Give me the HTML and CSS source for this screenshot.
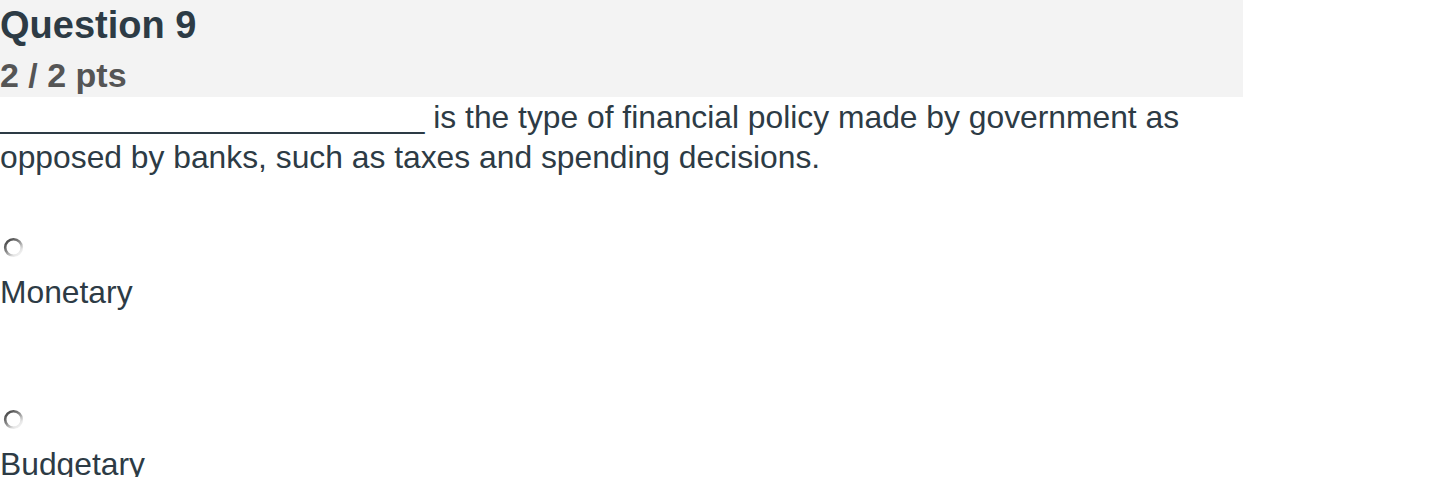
FILE: index.html
```html
<!DOCTYPE html>
<html lang="en">
<head>
<meta charset="utf-8">
<title>Question 9</title>
<link rel="stylesheet" href="styles.css">
</head>
<body>
<div class="question">
  <div class="q-header">
    <h2 class="q-title">Question 9</h2>
    <div class="q-points">2 / 2 pts</div>
  </div>
  <p class="q-text">________________________ is the type of financial policy made by government as opposed by banks, such as taxes and spending decisions.</p>
  <div class="answers">
    <div class="answer">
      <svg class="radio" width="21" height="21" viewBox="0 0 21 21" aria-hidden="true">
        <defs>
          <linearGradient id="rg1" x1="0.1" y1="0" x2="0.9" y2="1">
            <stop offset="0" stop-color="#3e3e3e"/>
            <stop offset="0.45" stop-color="#8a8a8a"/>
            <stop offset="0.8" stop-color="#e6e6e6"/>
            <stop offset="1" stop-color="#f6f6f6"/>
          </linearGradient>
        </defs>
        <circle cx="10.5" cy="10.5" r="8.3" fill="#fff" stroke="url(#rg1)" stroke-width="2.6"/>
      </svg>
      <div class="label">Monetary</div>
    </div>
    <div class="answer">
      <svg class="radio" width="21" height="21" viewBox="0 0 21 21" aria-hidden="true">
        <defs>
          <linearGradient id="rg2" x1="0.1" y1="0" x2="0.9" y2="1">
            <stop offset="0" stop-color="#3e3e3e"/>
            <stop offset="0.45" stop-color="#8a8a8a"/>
            <stop offset="0.8" stop-color="#e6e6e6"/>
            <stop offset="1" stop-color="#f6f6f6"/>
          </linearGradient>
        </defs>
        <circle cx="10.5" cy="10.5" r="8.3" fill="#fff" stroke="url(#rg2)" stroke-width="2.6"/>
      </svg>
      <div class="label">Budgetary</div>
    </div>
  </div>
</div>
</body>
</html>
```
FILE: styles.css
```css
html, body {
  margin: 0;
  padding: 0;
  background: #fff;
}
body {
  font-family: "Liberation Sans", Arial, sans-serif;
  color: #2d3b45;
  overflow: hidden;
}
.question {
  width: 1243px;
}
.q-header {
  background: #f3f3f3;
  height: 97px;
}
.q-title {
  margin: 0;
  font-size: 38px;
  font-weight: bold;
  line-height: 50px;
  color: #2d3b45;
}
.q-points {
  margin-top: 3px;
  font-size: 34px;
  font-weight: bold;
  line-height: 44px;
  color: #555;
}
.q-text {
  margin: 0;
  font-size: 31.8px;
  line-height: 40px;
  width: 1200px;
}
.answers {
  display: flex;
  flex-direction: column;
  margin-top: 60px;
}
.answer + .answer {
  margin-top: 97px;
}
.radio {
  display: block;
  margin-left: 3px;
}
.label {
  margin-top: 14px;
  font-size: 31.8px;
  line-height: 40px;
}
```
